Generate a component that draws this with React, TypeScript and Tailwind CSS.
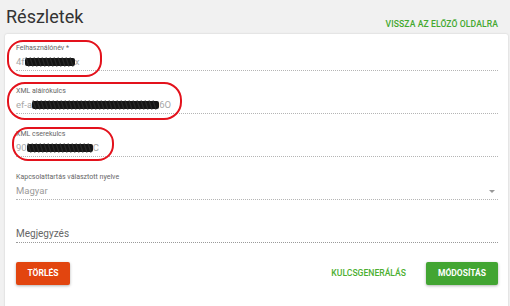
import React from "react";

const font = { fontFamily: "Roboto, 'Noto Sans', 'Liberation Sans', sans-serif" };

function Scribble({ w }: { w: number }) {
  return (
    <svg width={w} height={10} viewBox={`0 0 ${w} 10`} className="inline-block align-middle">
      <rect x={0} y={1} width={w} height={8} rx={2} fill="#151515" />
      {Array.from({ length: Math.floor(w / 4) }).map((_, i) => (
        <line key={i} x1={i * 4 + 1} y1={0.5} x2={i * 4 + 4} y2={9.5} stroke="#2a2a2a" strokeWidth={1.2} />
      ))}
    </svg>
  );
}

function Field({
  label,
  children,
  className = "",
  arrow = false,
}: {
  label: string;
  children: React.ReactNode;
  className?: string;
  arrow?: boolean;
}) {
  return (
    <div className={`relative border-b border-dotted border-[#b5b5b5] pb-[1px] ${className}`}>
      <div className="mt-[1px] h-[8px] text-[7px] leading-[8px] text-[#666]">{label}</div>
      <div className="mt-[3px] flex h-[14px] items-center text-[9.5px] leading-[14px] text-[#a8a8a8]">
        {children}
      </div>
      {arrow && (
        <div className="absolute right-[3px] top-[17px] h-0 w-0 border-l-[3px] border-r-[3px] border-t-[3px] border-l-transparent border-r-transparent border-t-[#999]" />
      )}
    </div>
  );
}

export default function App() {
  return (
    <div className="relative h-[306px] w-[510px] overflow-hidden bg-[#f1f1f1]" style={font}>
      <div className="flex h-[34px] items-start justify-between pl-[6px] pr-[12px]">
        <div className="pt-[5px] text-[18px] leading-[24px] text-[#333]">Részletek</div>
        <div className="pt-[18px] text-[8.6px] font-medium leading-[12px] tracking-[0.1px] text-[#43a82f]">
          VISSZA AZ ELŐZŐ OLDALRA
        </div>
      </div>

      <div className="ml-[5px] mr-[2px] h-[280px] rounded-[2px] bg-white px-[11px] pr-[10px] pt-[9px] shadow-[0_0_2px_rgba(0,0,0,0.18)]">
        <Field label="Felhasználónév *">
          <span>4f</span>
          <Scribble w={50} />
          <span>x</span>
        </Field>
        <Field label="XML aláírókulcs" className="mt-[16px]">
          <span>ef-a</span>
          <Scribble w={127} />
          <span>6O</span>
        </Field>
        <Field label="XML cserekulcs" className="mt-[16px]">
          <span>90</span>
          <Scribble w={66} />
          <span>C</span>
        </Field>
        <Field label="Kapcsolattartás választott nyelve" className="mt-[16px]" arrow>
          <span className="text-[#9a9a9a]">Magyar</span>
        </Field>
        <div className="mt-[27px] border-b border-dotted border-[#9a9a9a] pb-[1px]">
          <div className="h-[14px] text-[10px] leading-[14px] text-[#666]">Megjegyzés</div>
        </div>
        <div className="mt-[19px] flex items-center">
          <button className="h-[23px] w-[54px] rounded-[2px] bg-[#e2450f] text-[8.5px] font-bold text-white shadow-[0_1px_3px_rgba(0,0,0,0.3)]">
            TÖRLÉS
          </button>
          <div className="flex-1" />
          <span className="mr-[20px] text-[8.6px] font-medium text-[#4caf30]">KULCSGENERÁLÁS</span>
          <button className="h-[23px] w-[72px] rounded-[2px] bg-[#42a532] text-[8.5px] font-bold text-white shadow-[0_1px_3px_rgba(0,0,0,0.3)]">
            MÓDOSÍTÁS
          </button>
        </div>
      </div>

      <div className="absolute left-[7px] top-[40px] h-[37px] w-[95px] rounded-[16px] border-2 border-[#e3121c]" />
      <div className="absolute left-[7px] top-[82px] h-[38px] w-[175px] rounded-[18px] border-2 border-[#e3121c]" />
      <div className="absolute left-[12px] top-[127px] h-[34px] w-[102px] rounded-[16px] border-2 border-[#e3121c]" />
    </div>
  );
}
